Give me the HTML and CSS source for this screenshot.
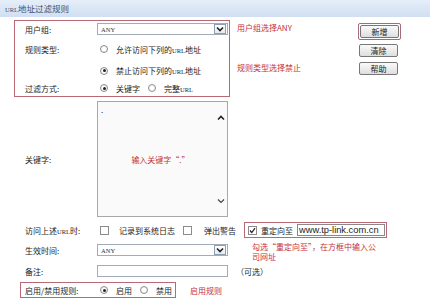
FILE: index.html
```html
<!DOCTYPE html>
<html lang="zh-CN">
<head>
    <meta charset="UTF-8">
    <title>URL地址过滤规则</title>
    <link rel="stylesheet" href="styles.css">
</head>
<body>
    <div class="titlebar"><small>URL</small>地址过滤规则</div>

    <div class="top">
        <div class="box box-main">
            <div class="row r1">
                <span class="lbl">用户组:</span>
                <div class="select">
                    <span class="val">ANY</span>
                    <span class="drop"><svg width="8" height="6" viewBox="0 0 8 6"><path d="M1 1.5 L4 4.5 L7 1.5" fill="none" stroke="#222" stroke-width="1.6"/></svg></span>
                </div>
            </div>
            <div class="row r2">
                <span class="lbl">规则类型:</span>
                <span class="radio"></span><span class="txt">允许访问下列的<small>URL</small>地址</span>
            </div>
            <div class="row r3">
                <span class="lbl"></span>
                <span class="radio on"></span><span class="txt">禁止访问下列的<small>URL</small>地址</span>
            </div>
            <div class="row r4">
                <span class="lbl">过滤方式:</span>
                <span class="radio on"></span><span class="txt">关键字</span>
                <span class="radio second"></span><span class="txt">完整<small>URL</small></span>
            </div>
        </div>
        <div class="notes">
            <p class="note">用户组选择ANY</p>
            <p class="note note-2">规则类型选择禁止</p>
        </div>
        <div class="buttons">
            <div class="btn-mark"><button class="btn">新增</button></div>
            <button class="btn">清除</button>
            <button class="btn">帮助</button>
        </div>
    </div>

    <div class="row kw">
        <span class="lbl">关键字:</span>
        <div class="textarea">
            <div class="ta-body">
                <span class="dot">.</span>
                <span class="note kw-note">输入关键字“.”</span>
            </div>
            <div class="scroll">
                <svg width="8" height="6" viewBox="0 0 8 6"><path d="M1 4.5 L4 1.5 L7 4.5" fill="none" stroke="#222" stroke-width="1.6"/></svg>
                <svg width="8" height="6" viewBox="0 0 8 6"><path d="M1 1.5 L4 4.5 L7 1.5" fill="none" stroke="#444" stroke-width="1.2"/></svg>
            </div>
        </div>
    </div>

    <div class="row visit">
        <span class="lbl">访问上述<small>URL</small>时:</span>
        <span class="check"></span><span class="txt">记录到系统日志</span>
        <span class="check check-2"></span><span class="txt warn">弹出警告</span>
        <div class="box redirect">
            <span class="check on"><svg width="7" height="7" viewBox="0 0 7 7"><path d="M1 3.5 L2.8 5.5 L6 1.2" fill="none" stroke="#222" stroke-width="1.2"/></svg></span>
            <span class="txt">重定向至</span>
            <span class="url">www.tp-link.com.cn</span>
            <span class="note redirect-note">勾选“重定向至”，在方框中输入公<br>司网址</span>
        </div>
    </div>

    <div class="row time">
        <span class="lbl">生效时间:</span>
        <div class="select">
            <span class="val">ANY</span>
            <span class="drop"><svg width="8" height="6" viewBox="0 0 8 6"><path d="M1 1.5 L4 4.5 L7 1.5" fill="none" stroke="#222" stroke-width="1.6"/></svg></span>
        </div>
    </div>

    <div class="row memo">
        <span class="lbl">备注:</span>
        <div class="input"></div>
        <span class="txt optional">（可选）</span>
    </div>

    <div class="row bottom">
        <div class="box box-enable">
            <span class="lbl">启用/禁用规则:</span>
            <span class="radio on"></span><span class="txt">启用</span>
            <span class="radio second"></span><span class="txt">禁用</span>
        </div>
        <span class="note enable-note">启用规则</span>
    </div>
</body>
</html>
```

FILE: styles.css
```css
body {
    margin: 0;
    width: 430px;
    height: 300px;
    overflow: hidden;
    background: #fff;
    font-family: "Noto Sans CJK SC", "Noto Sans", sans-serif;
    font-size: 8px;
    color: #1c1c1c;
}
small {
    font-family: "Liberation Serif", serif;
    font-size: 6.5px;
}
.titlebar {
    height: 17px;
    line-height: 17px;
    padding-left: 5px;
    background: linear-gradient(#e6eef9, #d0dff1);
    color: #3d5270;
    font-size: 8.5px;
}
.box {
    border: 1px solid #b86a74;
}
.row {
    display: flex;
    align-items: center;
}
.lbl {
    width: 72px;
    flex: none;
    white-space: nowrap;
}
.txt {
    white-space: nowrap;
}

/* top block */
.top {
    display: flex;
    margin-top: 3px;
    height: 77px;
}
.box-main {
    margin-left: 14px;
    width: 204px;
    padding-left: 10px;
}
.r1 { height: 16px; }
.r2 { height: 24px; }
.r3 { height: 19px; }
.r4 { height: 16px; }

.select {
    width: 129px;
    height: 10px;
    border: 1px solid #a3abb6;
    background: #fff;
    display: flex;
    align-items: center;
    justify-content: space-between;
}
.val {
    font-family: "Liberation Serif", serif;
    font-size: 6.5px;
    padding-left: 3px;
    color: #333;
}
.drop {
    width: 10px;
    height: 8px;
    margin-right: 1px;
    border: 1px solid #8d9db4;
    background: linear-gradient(#fff, #e4eaf3);
    display: flex;
    align-items: center;
    justify-content: center;
}

.radio {
    width: 6px;
    height: 6px;
    margin-left: 3px;
    margin-right: 8px;
    border: 1px solid #8c8c8c;
    border-radius: 50%;
    background: radial-gradient(circle, #fff 40%, #e2e2e2);
    display: flex;
    align-items: center;
    justify-content: center;
    flex: none;
}
.radio.on::after {
    content: "";
    width: 3px;
    height: 3px;
    border-radius: 50%;
    background: #222;
}
.radio.second {
    margin-left: 8px;
}

.notes {
    width: 121px;
    margin-left: 7px;
    padding-top: 2px;
}
.note {
    color: #c4303c;
    white-space: nowrap;
}
.notes .note {
    margin: 0;
    line-height: 12px;
}
.notes .note-2 {
    margin-top: 28px;
}

.buttons {
    display: flex;
    flex-direction: column;
    align-items: flex-start;
    padding-top: 3px;
}
.btn-mark {
    border: 1px solid #a86a74;
    border-radius: 2px;
    padding: 1px;
}
.btn {
    width: 39px;
    height: 13px;
    padding: 0;
    border: 1px solid #777;
    border-radius: 2px;
    background: linear-gradient(#fafafa, #dedede);
    font-family: inherit;
    font-size: 8px;
    line-height: 11px;
    color: #222;
}
.buttons > .btn {
    margin-left: 1px;
    margin-top: 4px;
}
.buttons > .btn:last-child {
    margin-top: 5px;
}

/* keyword */
.kw {
    margin-top: 4px;
    padding-left: 25px;
}
.textarea {
    width: 129px;
    height: 114px;
    border: 1px solid #a8a8a8;
    background: #fafafa;
    display: flex;
}
.ta-body {
    flex: 1;
    display: grid;
}
.dot {
    grid-area: 1 / 1;
    align-self: start;
    margin: 4px 0 0 3px;
    line-height: 8px;
}
.kw-note {
    grid-area: 1 / 1;
    align-self: center;
    justify-self: center;
    margin-left: 8px;
}
.scroll {
    width: 12px;
    display: flex;
    flex-direction: column;
    justify-content: space-between;
    align-items: center;
    padding: 13px 0 12px;
}

/* visit options */
.visit {
    margin-top: 5px;
    height: 16px;
    padding-left: 25px;
}
.check {
    width: 7px;
    height: 7px;
    margin-left: 3px;
    margin-right: 10px;
    border: 1px solid #8c8c8c;
    background: #fff;
    flex: none;
    display: flex;
    align-items: center;
    justify-content: center;
}
.check-2 {
    margin-left: 8px;
    margin-right: 12px;
}
.redirect {
    position: relative;
    height: 14px;
    margin-left: 8px;
    padding: 0 1px 0 3px;
    display: flex;
    align-items: center;
}
.redirect .check {
    margin: 0 4px 0 0;
}
.url {
    width: 85px;
    height: 10px;
    margin-left: 4px;
    border: 1px solid #8a8a8a;
    background: #fff;
    font-family: "Liberation Sans", sans-serif;
    font-size: 9.3px;
    line-height: 10px;
    color: #222;
    padding-left: 1px;
    white-space: nowrap;
    overflow: hidden;
}
.redirect-note {
    position: absolute;
    top: 100%;
    left: 7px;
    padding-top: 5px;
    line-height: 10px;
}

/* time & memo */
.time {
    height: 24px;
    padding-left: 25px;
}
.memo {
    height: 18px;
    padding-left: 25px;
}
.input {
    width: 129px;
    height: 10px;
    border: 1px solid #a3abb6;
    background: #fff;
}
.optional {
    margin-left: 8px;
}

/* enable */
.bottom {
    margin-top: 2px;
}
.box-enable {
    margin-left: 20px;
    height: 14px;
    padding: 0 3px 0 4px;
    display: flex;
    align-items: center;
}
.enable-note {
    margin-left: 14px;
}
```
